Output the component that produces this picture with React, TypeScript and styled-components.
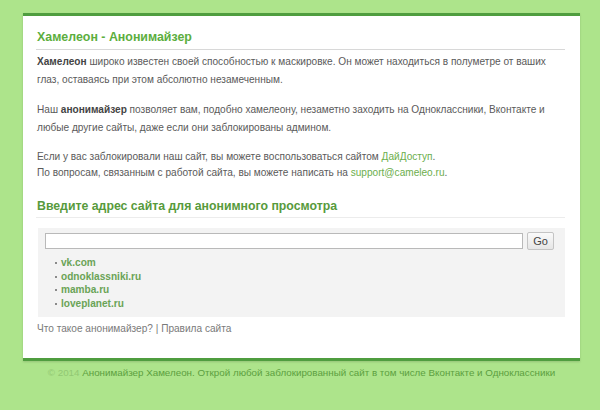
import React, { useState } from 'react';
import styled, { createGlobalStyle } from 'styled-components';

const GlobalStyle = createGlobalStyle`
body {
    margin: 0;
    background: #ade48b;
    font-family: "Liberation Sans", Arial, sans-serif;
}
`;

const Page = styled.div`
padding: 13px 20px 0 23px;
width: 557px;
`;

const Card = styled.div`
background: #ffffff;
border-top: 3px solid #4f9d3f;
border-bottom: 3px solid #4f9d3f;
padding: 13px 15px 21px 13px;
box-shadow: 0 1px 2px rgba(0, 0, 0, 0.15);
`;

const Title = styled.h1`
margin: 0 0 3px 0;
padding: 0 0 4px 1px;
font-size: 12.4px;
line-height: 16px;
font-weight: bold;
color: #5cae3e;
border-bottom: 1px solid #d8d8d8;
`;

const SubTitle = styled(Title)`
color: #579a3c;
margin-top: 17px;
margin-bottom: 3px;
padding-bottom: 3px;
font-size: 12.3px;
border-bottom-color: #ececec;
`;

const Text = styled.p<{ $tight?: boolean }>`
margin: 0 0 12px 0;
padding-left: 1px;
font-size: 10.1px;
line-height: ${(p) => (p.$tight ? '16px' : '18px')};
color: #5a5a5a;
white-space: nowrap;
b {
    color: #444;
}
`;

const Link = styled.a`
color: #6cae4c;
text-decoration: none;
`;

const Box = styled.div`
margin: 10px 0 0 2px;
background: #f3f3f3;
padding: 4px 11px 7px 7px;
`;

const Form = styled.form`
display: flex;
align-items: center;
gap: 4px;
`;

const Input = styled.input`
flex: 1;
height: 16px;
box-sizing: border-box;
border: 1px solid #b9b9b9;
background: #fff;
padding: 0 3px;
font-size: 11px;
`;

const GoButton = styled.button`
width: 27px;
height: 18px;
padding: 0;
border: 1px solid #c4c4c4;
border-radius: 2px;
background: linear-gradient(#fafafa, #e6e6e6);
font-family: "Liberation Sans", sans-serif;
font-size: 11px;
color: #444;
`;

const Sites = styled.ul`
margin: 6px 0 0 0;
padding: 0 0 0 16px;
list-style: none;
`;

const Site = styled.li`
position: relative;
font-size: 10.1px;
line-height: 13.5px;
font-weight: bold;
&::before {
    content: '';
    position: absolute;
    left: -6px;
    top: 6px;
    width: 2px;
    height: 2px;
    background: #8a8a8a;
}
a {
    color: #6aa356;
}
`;

const Help = styled.div`
margin-top: 4px;
padding-left: 1px;
font-size: 10.1px;
line-height: 16px;
color: #777;
a {
    color: #7a7a7a;
}
`;

const Footer = styled.div`
padding: 4px 0 0 0;
text-align: center;
font-size: 9.8px;
line-height: 16px;
color: #5c9f40;
span {
    color: #92c873;
}
`;

const sites = ['vk.com', 'odnoklassniki.ru', 'mamba.ru', 'loveplanet.ru'];

const App = () => {
    const [url, setUrl] = useState('');

    return (
        <>
            <GlobalStyle />
            <Page>
                <Card>
                    <Title>Хамелеон - Анонимайзер</Title>
                    <Text>
                        <b>Хамелеон</b> широко известен своей способностью к маскировке. Он может находиться в полуметре от ваших<br />
                        глаз, оставаясь при этом абсолютно незамеченным.
                    </Text>
                    <Text>
                        Наш <b>анонимайзер</b> позволяет вам, подобно хамелеону, незаметно заходить на Одноклассники, Вконтакте и<br />
                        любые другие сайты, даже если они заблокированы админом.
                    </Text>
                    <Text $tight>
                        Если у вас заблокировали наш сайт, вы можете воспользоваться сайтом <Link href="#">ДайДоступ</Link>.<br />
                        По вопросам, связанным с работой сайта, вы можете написать на <Link href="#">support@cameleo.ru</Link>.
                    </Text>
                    <SubTitle as="h2">Введите адрес сайта для анонимного просмотра</SubTitle>
                    <Box>
                        <Form onSubmit={(e) => e.preventDefault()}>
                            <Input value={url} onChange={(e) => setUrl(e.target.value)} />
                            <GoButton type="submit">Go</GoButton>
                        </Form>
                        <Sites>
                            {sites.map((s) => (
                                <Site key={s}><Link href="#">{s}</Link></Site>
                            ))}
                        </Sites>
                    </Box>
                    <Help>
                        <a>Что такое анонимайзер?</a> | <a>Правила сайта</a>
                    </Help>
                </Card>
                <Footer>
                    <span>© 2014</span> Анонимайзер Хамелеон. Открой любой заблокированный сайт в том числе Вконтакте и Одноклассники
                </Footer>
            </Page>
        </>
    );
};

export default App;
